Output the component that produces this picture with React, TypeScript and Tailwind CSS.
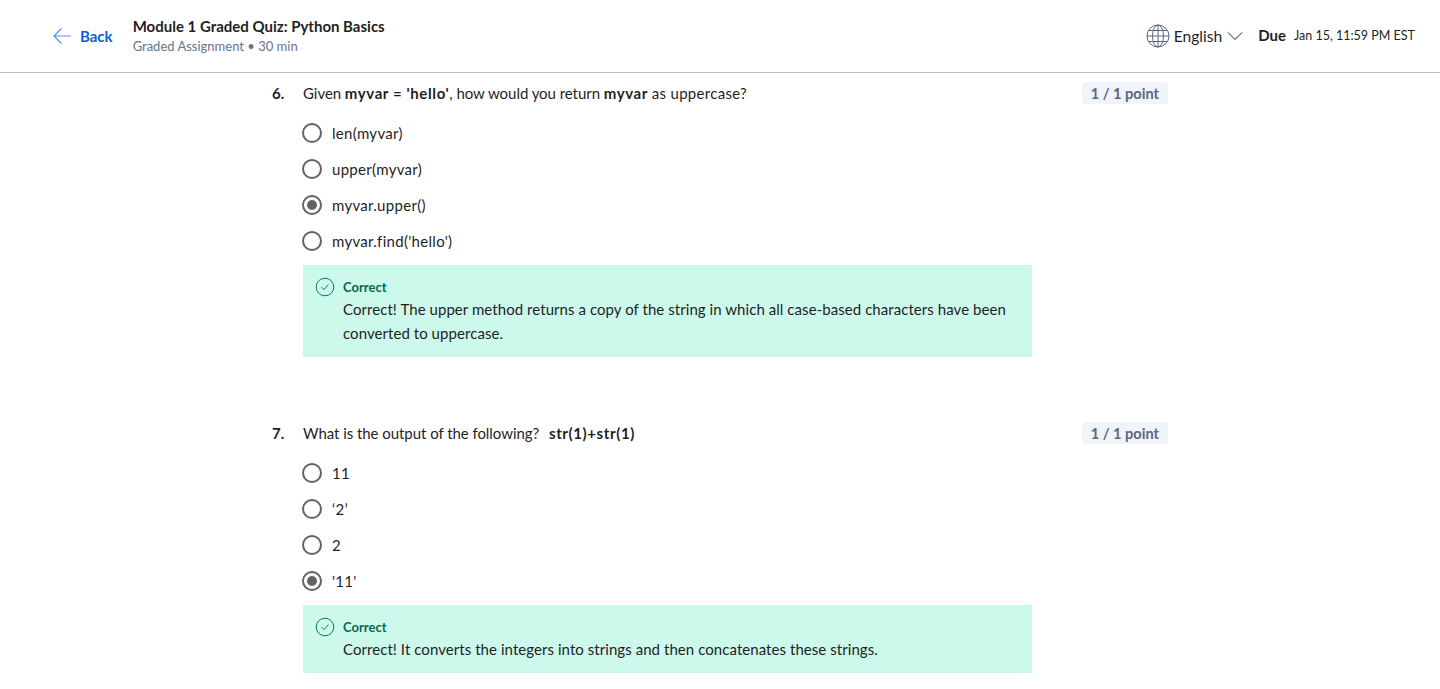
import React from "react";

const font = { fontFamily: "Lato, 'Noto Sans', sans-serif" };

const Radio = ({ checked }: { checked?: boolean }) => (
  <span className="flex h-5 w-5 shrink-0 items-center justify-center rounded-full border-2 border-[#636363] bg-white">
    {checked && <span className="h-[10px] w-[10px] rounded-full bg-[#636363]" />}
  </span>
);

const Option = ({ label, checked }: { label: string; checked?: boolean }) => (
  <div className="flex h-9 items-center gap-[10px]">
    <Radio checked={checked} />
    <span className="text-[15px] tracking-[0.3px] text-[#1f1f1f]">{label}</span>
  </div>
);

const CheckIcon = () => (
  <svg width="20" height="20" viewBox="0 0 20 20" fill="none" className="shrink-0">
    <circle cx="10" cy="10" r="8.8" stroke="#0a7a5a" strokeWidth="1" />
    <path d="M6.6 10.2l2.4 2.4 4.4-5" stroke="#0a7a5a" strokeWidth="1" />
  </svg>
);

const Feedback = ({ lines }: { lines: string[] }) => (
  <div className="ml-[31px] flex w-[729px] gap-2 bg-[#cdf9ec] pl-3 pr-5 pt-3 pb-3">
    <CheckIcon />
    <div>
      <div className="text-[13px] font-bold leading-5 text-[#04694c]">Correct</div>
      {lines.map((line) => (
        <div key={line} className="text-[15px] leading-6 tracking-[0.06px] text-[#1f1f1f]">
          {line}
        </div>
      ))}
    </div>
  </div>
);

const Question = ({
  num,
  children,
  options,
  selected,
  feedback,
}: {
  num: string;
  children: React.ReactNode;
  options: string[];
  selected: number;
  feedback: string[];
}) => (
  <section>
    <div className="flex h-6 items-center justify-between">
      <div className="-mt-px flex items-center">
        <span className="w-[31px] text-[15px] font-bold text-[#1f1f1f]">{num}</span>
        <span className="text-[15px] tracking-[-0.05px] text-[#1f1f1f]">{children}</span>
      </div>
      <span className="mb-[2px] rounded bg-[#f0f3f8] px-[9px] pt-px text-[14.6px] font-bold leading-[21px] text-[#5b6780]">
        1 / 1 point
      </span>
    </div>
    <div className="ml-[30px] mt-[9px] mb-[6px]">
      {options.map((o, i) => (
        <Option key={o} label={o} checked={i === selected} />
      ))}
    </div>
    <Feedback lines={feedback} />
  </section>
);

export default function App() {
  return (
    <div className="h-[689px] overflow-hidden bg-white" style={font}>
      <header className="flex h-[73px] items-center justify-between border-b border-[#bdbdbd] pl-[53px] pr-[25px]">
        <div className="flex items-center">
          <div className="flex items-center gap-[9px] text-[#0b5fd6]">
            <svg width="18" height="18" viewBox="0 0 18 18" fill="none">
              <path d="M18 9H1M8.5 1.5L1 9l7.5 7.5" stroke="#5b93e8" strokeWidth="1.2" />
            </svg>
            <span className="text-[15px] font-bold">Back</span>
          </div>
          <div className="ml-5">
            <div className="-mt-[2px] text-[15px] font-bold leading-5 text-[#1f1f1f]">
              Module 1 Graded Quiz: Python Basics
            </div>
            <div className="mt-[1px] text-[13px] leading-[18px] text-[#66748f]">
              Graded Assignment • 30 min
            </div>
          </div>
        </div>
        <div className="flex items-center">
          <svg width="24" height="24" viewBox="0 0 24 24" fill="none" stroke="#5b6780" strokeWidth="1">
            <circle cx="12" cy="12" r="11" />
            <ellipse cx="12" cy="12" rx="5.5" ry="11" />
            <path d="M12 1v22M1 12h22M2.6 6.5h18.8M2.6 17.5h18.8" />
          </svg>
          <span className="ml-1 mt-px text-[15.6px] text-[#1f1f1f]">English</span>
          <svg width="16" height="10" viewBox="0 0 16 10" fill="none" className="ml-[5px]">
            <path d="M1 1.5l7 7 7-7" stroke="#1f1f1f" strokeWidth="1" />
          </svg>
          <span className="ml-[15px] -mt-px text-[15px] font-bold text-[#1f1f1f]">Due</span>
          <span className="ml-2 text-[12.5px] text-[#1f1f1f]">Jan 15, 11:59 PM EST</span>
        </div>
      </header>
      <main className="ml-[272px] w-[896px]">
        <div className="pt-[9px]">
          <Question
            num="6."
            options={["len(myvar)", "upper(myvar)", "myvar.upper()", "myvar.find('hello')"]}
            selected={2}
            feedback={[
              "Correct! The upper method returns a copy of the string in which all case-based characters have been",
              "converted to uppercase.",
            ]}
          >
            Given <b className="tracking-[0.6px]">myvar = 'hello'</b>, how would you return{" "}
            <b className="tracking-[0.6px]">myvar</b> <span className="tracking-[0.3px]">as uppercase?</span>
          </Question>
        </div>
        <div className="mt-[65px]">
          <Question
            num="7."
            options={["11", "‘2’", "2", "'11'"]}
            selected={3}
            feedback={["Correct! It converts the integers into strings and then concatenates these strings."]}
          >
            What is the output of the following? <b className="ml-[6px] tracking-[0.6px]">str(1)+str(1)</b>
          </Question>
        </div>
      </main>
    </div>
  );
}
